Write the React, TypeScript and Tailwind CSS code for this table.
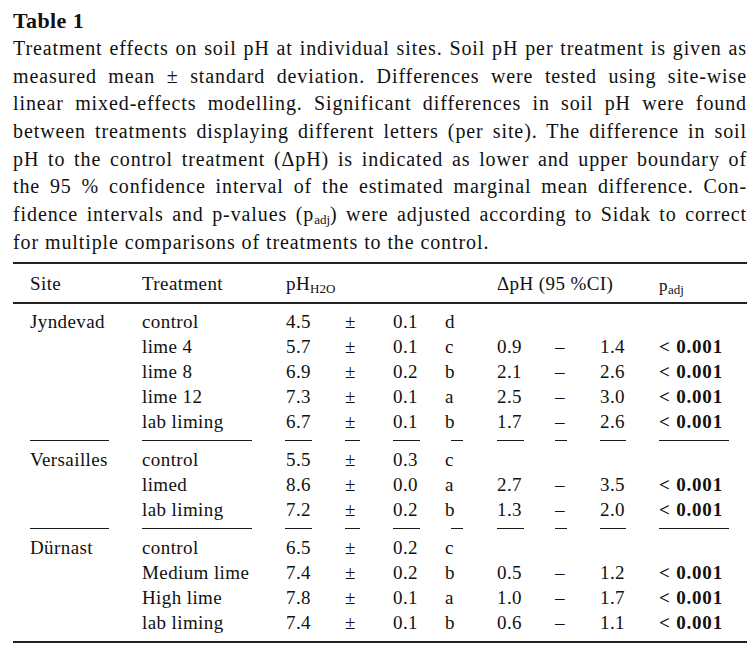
import React from "react";

type Row = {
  treatment: string;
  ph: string;
  sd: string;
  letter: string;
  lo?: string;
  hi?: string;
  p?: string;
};

type Group = { site: string; rows: Row[] };

const groups: Group[] = [
  {
    site: "Jyndevad",
    rows: [
      { treatment: "control", ph: "4.5", sd: "0.1", letter: "d" },
      { treatment: "lime 4", ph: "5.7", sd: "0.1", letter: "c", lo: "0.9", hi: "1.4", p: "< 0.001" },
      { treatment: "lime 8", ph: "6.9", sd: "0.2", letter: "b", lo: "2.1", hi: "2.6", p: "< 0.001" },
      { treatment: "lime 12", ph: "7.3", sd: "0.1", letter: "a", lo: "2.5", hi: "3.0", p: "< 0.001" },
      { treatment: "lab liming", ph: "6.7", sd: "0.1", letter: "b", lo: "1.7", hi: "2.6", p: "< 0.001" },
    ],
  },
  {
    site: "Versailles",
    rows: [
      { treatment: "control", ph: "5.5", sd: "0.3", letter: "c" },
      { treatment: "limed", ph: "8.6", sd: "0.0", letter: "a", lo: "2.7", hi: "3.5", p: "< 0.001" },
      { treatment: "lab liming", ph: "7.2", sd: "0.2", letter: "b", lo: "1.3", hi: "2.0", p: "< 0.001" },
    ],
  },
  {
    site: "Dürnast",
    rows: [
      { treatment: "control", ph: "6.5", sd: "0.2", letter: "c" },
      { treatment: "Medium lime", ph: "7.4", sd: "0.2", letter: "b", lo: "0.5", hi: "1.2", p: "< 0.001" },
      { treatment: "High lime", ph: "7.8", sd: "0.1", letter: "a", lo: "1.0", hi: "1.7", p: "< 0.001" },
      { treatment: "lab liming", ph: "7.4", sd: "0.1", letter: "b", lo: "0.6", hi: "1.1", p: "< 0.001" },
    ],
  },
];

// column grid shared by header, rows and the rules between sites
const cols =
  "grid grid-cols-[112px_144px_59px_48px_52px_52px_58px_45px_59px_1fr] pl-[17px]";

// short rules under each column (cmidrule look)
const segments = [
  "w-[79px]",
  "w-[110px]",
  "ml-[-1px] w-[27px]",
  "w-[15px]",
  "w-[27px]",
  "ml-[6px] w-[12px]",
  "w-[27px]",
  "w-[12px]",
  "w-[26px]",
  "w-[70px]",
];

function Sub({ children }: { children: React.ReactNode }) {
  return (
    <span className="relative top-[3px] text-[13px] leading-none tracking-normal">{children}</span>
  );
}

const captionLines = [
  <>Treatment effects on soil pH at individual sites. Soil pH per treatment is given as</>,
  <>measured mean ± standard deviation. Differences were tested using site-wise</>,
  <>linear mixed-effects modelling. Significant differences in soil pH were found</>,
  <>between treatments displaying different letters (per site). The difference in soil</>,
  <>pH to the control treatment (ΔpH) is indicated as lower and upper boundary of</>,
  <>the 95 % confidence interval of the estimated marginal mean difference. Con-</>,
  <>
    fidence intervals and p-values (p<Sub>adj</Sub>) were adjusted according to Sidak to correct
  </>,
];

function Separator() {
  return (
    <div className={`${cols} h-[13px] items-start pt-[6px]`}>
      {segments.map((s, i) => (
        <div key={i}>
          <div className={`h-px bg-[#1a1a1a] ${s}`} />
        </div>
      ))}
    </div>
  );
}

export default function App() {
  return (
    <div className="min-h-[656px] w-[756px] bg-white px-[13px] pt-[7px] text-[#111] font-['Liberation_Serif','Times_New_Roman',serif]">
      <div className="h-[28px] text-[22px] font-bold leading-[28px] tracking-[0.4px]">Table 1</div>

      {/* Caption, justified line by line */}
      <div className="w-[734px] text-[20px] leading-[27.7px] tracking-[0.9px]">
        {captionLines.map((line, i) => (
          <div key={i} className="h-[27.7px] whitespace-nowrap text-justify [text-align-last:justify]">
            {line}
          </div>
        ))}
        <div className="whitespace-nowrap">for multiple comparisons of treatments to the control.</div>
      </div>

      {/* Table */}
      <div className="mt-[5px] w-[734px] text-[19px] leading-[25px] tracking-[0.4px]">
        <div className="h-[2px] bg-[#222]" />

        <div className={`${cols} mt-[7px] h-[25px]`}>
          <div>Site</div>
          <div>Treatment</div>
          <div className="col-span-4">
            pH<Sub>H2O</Sub>
          </div>
          <div className="col-span-3">ΔpH (95 %CI)</div>
          <div className="relative top-[2px] text-[17px] leading-[25px]">
            p<Sub>adj</Sub>
          </div>
        </div>

        <div className="mt-[6px] h-[2px] bg-[#222]" />

        <div className="mt-[5px]">
          {groups.map((g, gi) => (
            <div key={g.site}>
              {gi > 0 && <Separator />}
              {g.rows.map((r, ri) => (
                <div key={ri} className={`${cols} h-[25px]`}>
                  <div>{ri === 0 ? g.site : ""}</div>
                  <div>{r.treatment}</div>
                  <div>{r.ph}</div>
                  <div>±</div>
                  <div>{r.sd}</div>
                  <div>{r.letter}</div>
                  <div>{r.lo ?? ""}</div>
                  <div>{r.lo ? "–" : ""}</div>
                  <div>{r.hi ?? ""}</div>
                  <div className="font-bold tracking-[0.8px]">{r.p ?? ""}</div>
                </div>
              ))}
            </div>
          ))}
        </div>

        <div className="mt-[6px] h-[2px] bg-[#222]" />
      </div>
    </div>
  );
}
